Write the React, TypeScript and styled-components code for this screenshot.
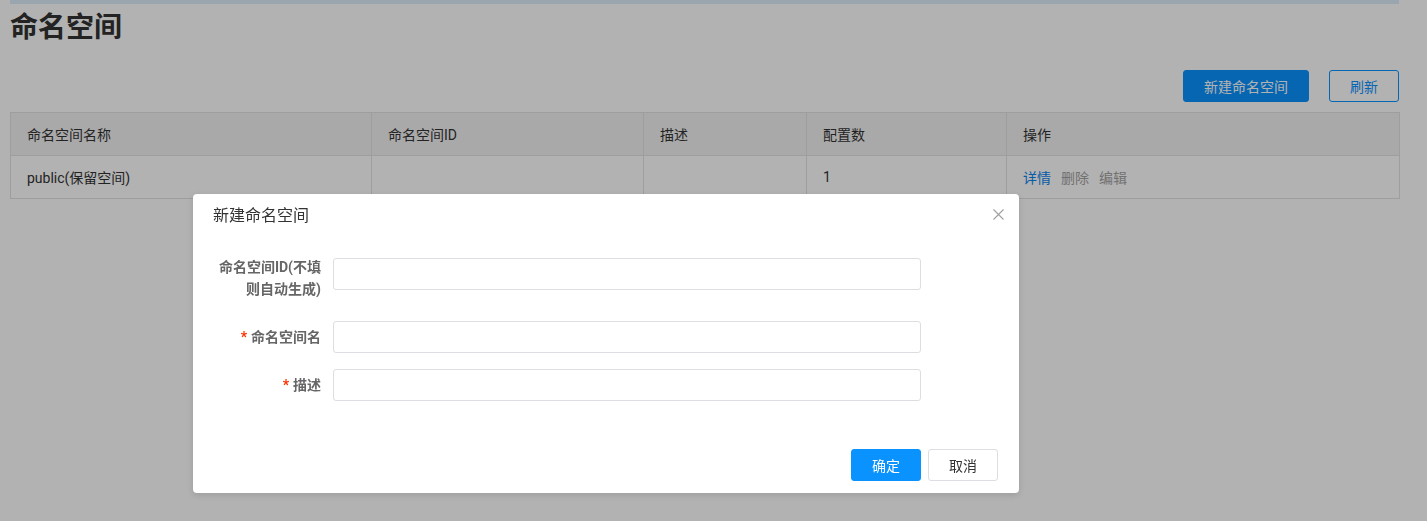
import React from "react"
import styled, { createGlobalStyle } from "styled-components"

const GlobalStyle = createGlobalStyle`
  html, body {
    margin: 0;
    padding: 0;
    background: #ffffff;
    font-family: Roboto, "Noto Sans CJK SC", sans-serif;
    font-size: 14px;
    color: #333333;
  }
  * { box-sizing: border-box; }
`

const PRIMARY = "#0a92ff"

const Page = styled.div`
  padding: 0 28px 0 10px;
  min-height: 521px;
`

const TopBar = styled.div`
  height: 4px;
  background: #dcedfb;
`

const Title = styled.h1`
  margin: 0;
  height: 48px;
  line-height: 48px;
  font-size: 28px;
  font-weight: 700;
  color: #333333;
`

const Toolbar = styled.div`
  display: flex;
  justify-content: flex-end;
  gap: 20px;
  margin-top: 18px;
  margin-bottom: 10px;
`

const Button = styled.button<{ $variant?: "primary" | "outline" | "normal" }>`
  height: 32px;
  padding: 0 20px;
  border-radius: 3px;
  font-family: inherit;
  font-size: 14px;
  cursor: pointer;
  border: 1px solid
    ${(p) => (p.$variant === "normal" ? "#dcdee3" : PRIMARY)};
  background: ${(p) => (p.$variant === "primary" ? PRIMARY : "#ffffff")};
  color: ${(p) =>
    p.$variant === "primary" ? "#ffffff" : p.$variant === "outline" ? PRIMARY : "#333333"};
`

const Table = styled.table`
  width: 100%;
  border-collapse: collapse;
  table-layout: fixed;
  border: 1px solid #e3e3e3;
`

const Th = styled.th`
  height: 43px;
  padding: 0 16px;
  background: #f3f3f3;
  border: 1px solid #e3e3e3;
  text-align: left;
  font-weight: 400;
  color: #333333;
`

const Td = styled.td`
  height: 43px;
  padding: 0 16px;
  border: 1px solid #e3e3e3;
  color: #333333;
`

const Actions = styled.div`
  display: flex;
  gap: 10px;
`

const Action = styled.a<{ $link?: boolean }>`
  color: ${(p) => (p.$link ? "#0b85f0" : "#a3a3a3")};
  text-decoration: none;
  cursor: pointer;
`

const Mask = styled.div`
  position: fixed;
  inset: 0;
  background: rgba(0, 0, 0, 0.3);
`

const Dialog = styled.div`
  position: absolute;
  left: 193px;
  top: 194px;
  width: 826px;
  background: #ffffff;
  border-radius: 4px;
  box-shadow: 0 2px 6px rgba(0, 0, 0, 0.12);
`

const DialogHeader = styled.div`
  display: flex;
  align-items: center;
  justify-content: space-between;
  height: 40px;
  padding: 0 13px 0 20px;
  font-size: 16px;
  color: #333333;
`

const Close = styled.button`
  width: 16px;
  height: 16px;
  padding: 0;
  border: 0;
  background: none;
  cursor: pointer;
  display: flex;
  align-items: center;
  justify-content: center;
`

const DialogBody = styled.div`
  padding: 24px 20px 20px;
`

const FormItem = styled.div<{ $tall?: boolean }>`
  display: flex;
  align-items: flex-start;
  margin-bottom: 16px;
  height: ${(p) => (p.$tall ? "47px" : "32px")};
`

const Label = styled.label<{ $multi?: boolean }>`
  flex: 0 0 120px;
  padding-right: 12px;
  text-align: right;
  line-height: 22px;
  margin-top: ${(p) => (p.$multi ? "-2px" : "5px")};
  font-weight: 700;
  color: #666666;
`

const Required = styled.span`
  color: #ff3000;
  margin-right: 4px;
`

const Input = styled.input`
  flex: 0 0 588px;
  height: 32px;
  border: 1px solid #dcdee3;
  border-radius: 3px;
  padding: 0 8px;
  font-family: inherit;
  font-size: 14px;
  outline: none;
`

const DialogFooter = styled.div`
  display: flex;
  justify-content: flex-end;
  gap: 7px;
  padding: 12px 21px 12px 20px;
`

const columns = [361, 272, 163, 200, 393]

export default function App() {
  return (
    <>
      <GlobalStyle />
      <Page>
        <TopBar />
        <Title>命名空间</Title>
        <Toolbar>
          <Button $variant="primary">新建命名空间</Button>
          <Button $variant="outline">刷新</Button>
        </Toolbar>
        <Table>
          <colgroup>
            {columns.map((w, i) => (
              <col key={i} style={{ width: w }} />
            ))}
          </colgroup>
          <thead>
            <tr>
              <Th>命名空间名称</Th>
              <Th>命名空间ID</Th>
              <Th>描述</Th>
              <Th>配置数</Th>
              <Th>操作</Th>
            </tr>
          </thead>
          <tbody>
            <tr>
              <Td>public(保留空间)</Td>
              <Td></Td>
              <Td></Td>
              <Td>1</Td>
              <Td>
                <Actions>
                  <Action $link>详情</Action>
                  <Action>删除</Action>
                  <Action>编辑</Action>
                </Actions>
              </Td>
            </tr>
          </tbody>
        </Table>
      </Page>
      <Mask />
      <Dialog>
        <DialogHeader>
          <span>新建命名空间</span>
          <Close aria-label="close">
            <svg width="11" height="11" viewBox="0 0 11 11">
              <path d="M0.5 0.5L10.5 10.5M10.5 0.5L0.5 10.5" stroke="#a0a0a0" strokeWidth="1.1" fill="none" />
            </svg>
          </Close>
        </DialogHeader>
        <DialogBody>
          <FormItem $tall>
            <Label $multi>命名空间ID(不填则自动生成)</Label>
            <Input />
          </FormItem>
          <FormItem>
            <Label>
              <Required>*</Required>命名空间名
            </Label>
            <Input />
          </FormItem>
          <FormItem>
            <Label>
              <Required>*</Required>描述
            </Label>
            <Input />
          </FormItem>
        </DialogBody>
        <DialogFooter>
          <Button $variant="primary">确定</Button>
          <Button $variant="normal">取消</Button>
        </DialogFooter>
      </Dialog>
    </>
  )
}
